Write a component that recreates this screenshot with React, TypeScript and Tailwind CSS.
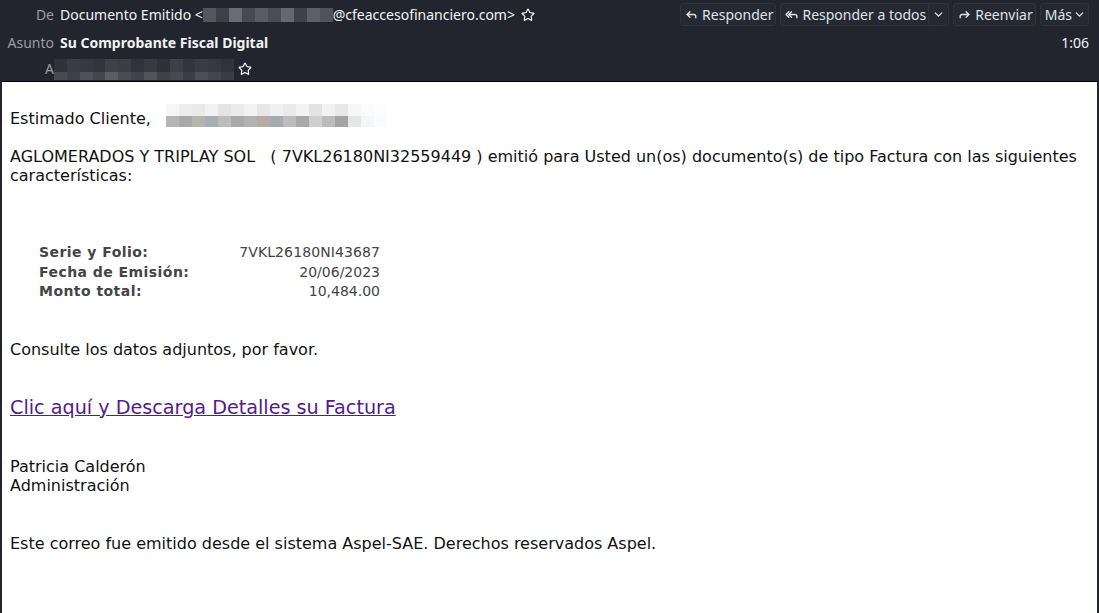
import { Reply, ReplyAll, Forward, ChevronDown, Star } from 'lucide-react';

const headerFont = { fontFamily: '"Noto Sans", "Open Sans", sans-serif' };
const bodyFont = { fontFamily: '"DejaVu Sans", Verdana, sans-serif' };

const BlurDark = ({ shades, height = 'h-[14px]' }: { shades: string[]; height?: string }) => (
  <span className={`inline-flex ${height}`}>
    {shades.map((c, i) => (
      <span key={i} className="w-[13px] h-full" style={{ backgroundColor: c }} />
    ))}
  </span>
);

const HeaderButton = ({ icon, label, split }: { icon: React.ReactNode; label: string; split?: boolean }) => (
  <div className="flex items-stretch h-[23px] rounded-[3px] border border-[#30323b] bg-[#272932] text-[#dde3ee]">
    <div className="flex items-center gap-[4px] pl-[4px] pr-[2px] text-[14px]">
      {icon}
      <span>{label}</span>
    </div>
    {split && (
      <div className="flex items-center px-[3px] border-l border-[#30323b]">
        <ChevronDown size={13} strokeWidth={2.5} />
      </div>
    )}
  </div>
);

export default function App() {
  return (
    <div className="min-h-[613px] bg-[#23252e] flex flex-col" style={headerFont}>
      {/* header */}
      <div className="h-[81px] flex flex-col text-[14px] text-[#f2f3f5]">
        <div className="h-[29px] flex items-center pr-[10px]">
          <span className="w-[54px] text-right text-[#9b9da4]">De</span>
          <span className="ml-[6px]">Documento Emitido &lt;</span>
          <BlurDark shades={['#55575f', '#3e4049', '#6a6c73', '#474952', '#5a5c64', '#4b4d56', '#66686f', '#3f414a', '#5d5f67', '#50525b']} />
          <span>@cfeaccesofinanciero.com&gt;</span>
          <Star size={14} strokeWidth={2} className="ml-[6px] text-white" />
          <div className="ml-auto flex items-center gap-[4px]">
            <HeaderButton icon={<Reply size={13} strokeWidth={2.5} />} label="Responder" />
            <HeaderButton icon={<ReplyAll size={13} strokeWidth={2.5} />} label="Responder a todos" split />
            <HeaderButton icon={<Forward size={13} strokeWidth={2.5} />} label="Reenviar" />
            <div className="flex items-center h-[23px] rounded-[3px] border border-[#30323b] bg-[#272932] text-[#dde3ee] pl-[4px] pr-[2px] gap-[1px]">
              <span>Más</span>
              <ChevronDown size={13} strokeWidth={2.5} />
            </div>
          </div>
        </div>
        <div className="h-[27px] flex items-center pr-[10px]">
          <span className="w-[54px] text-right text-[#9b9da4]">Asunto</span>
          <span className="ml-[6px] font-bold">Su Comprobante Fiscal Digital</span>
          <span className="ml-auto">1:06</span>
        </div>
        <div className="h-[25px] flex items-center">
          <span className="w-[54px] text-right text-[#9b9da4]">A</span>
          <span className="flex flex-col w-[180px] h-[22px] mt-[2px]">
            <BlurDark height="h-[13px]" shades={['#30323b', '#3a3c45', '#363841', '#33353e', '#3f4149', '#3c3e47', '#31333c', '#383a43', '#2f3139', '#3d3f48', '#34363f', '#393b44', '#363841', '#31333c']} />
            <BlurDark height="h-[8px]" shades={['#484a53', '#3e4049', '#4f5159', '#44464f', '#5b5d65', '#4a4c55', '#41434c', '#52545c', '#3f4149', '#474952', '#3c3e47', '#4d4f58', '#43454e', '#3a3c45']} />
          </span>
          <Star size={14} strokeWidth={2} className="ml-[4px] text-white" />
        </div>
      </div>

      {/* message body */}
      <div className="flex-1 mx-[2px] bg-white border-t border-black text-[16px] text-[#111] leading-[19px] px-[8px] pt-[27px] pb-[50px]" style={bodyFont}>
        <p className="flex items-center">
          <span>Estimado Cliente,</span>
          <span className="ml-[15px] flex flex-col w-[225px] h-[24px] -mt-[6px]">
            <span className="flex h-[12px]">
              {['#f6f6f6', '#ededed', '#e9e9e9', '#f1f1f1', '#e4e4e4', '#ececec', '#f3f3f3', '#e7e7e7', '#f0f0f0', '#eaeaea', '#f4f4f4', '#e3e3e3', '#f2f2f2', '#e8e8e8', '#f7f7f7', '#fbfbfb', '#fdfdfd'].map((c, i) => (
                <span key={i} className="w-[13px] h-full" style={{ backgroundColor: c }} />
              ))}
            </span>
            <span className="flex h-[11px]">
              {['#b5b5b5', '#a9a9a9', '#b9b3ad', '#a8aeb4', '#bcbcbc', '#aaaaaa', '#b2b2b2', '#b5aca6', '#a6abb0', '#bdbdbd', '#a9a9a9', '#cfcfcf', '#bbbbbb', '#a4a4a4', '#e6e6e6', '#f4f6f8', '#fbfcfd'].map((c, i) => (
                <span key={i} className="w-[13px] h-full" style={{ backgroundColor: c }} />
              ))}
            </span>
          </span>
        </p>

        <p className="mt-[19px]">
          AGLOMERADOS Y TRIPLAY SOL&nbsp;&nbsp; ( 7VKL26180NI32559449 ) emitió para Usted un(os) documento(s) de tipo Factura con las siguientes características:
        </p>

        <div className="mt-[58px] ml-[29px] grid grid-cols-[195px_146px] text-[14px] leading-[19.5px] text-[#444]">
          <span className="font-bold tracking-[0.45px]">Serie y Folio:</span>
          <span className="text-right tracking-[0.1px]">7VKL26180NI43687</span>
          <span className="font-bold tracking-[0.45px]">Fecha de Emisión:</span>
          <span className="text-right">20/06/2023</span>
          <span className="font-bold tracking-[0.45px]">Monto total:</span>
          <span className="text-right">10,484.00</span>
        </div>

        <p className="mt-[38px]">Consulte los datos adjuntos, por favor.</p>

        <p className="mt-[37px] text-[19.2px] leading-[23px]">
          <a href="#" className="underline text-[#551a8b]">Clic aquí y Descarga Detalles su Factura</a>
        </p>

        <p className="mt-[38px]">
          Patricia Calderón
          <br />
          Administración
        </p>

        <p className="mt-[39px]">Este correo fue emitido desde el sistema Aspel-SAE. Derechos reservados Aspel.</p>
      </div>
    </div>
  );
}
